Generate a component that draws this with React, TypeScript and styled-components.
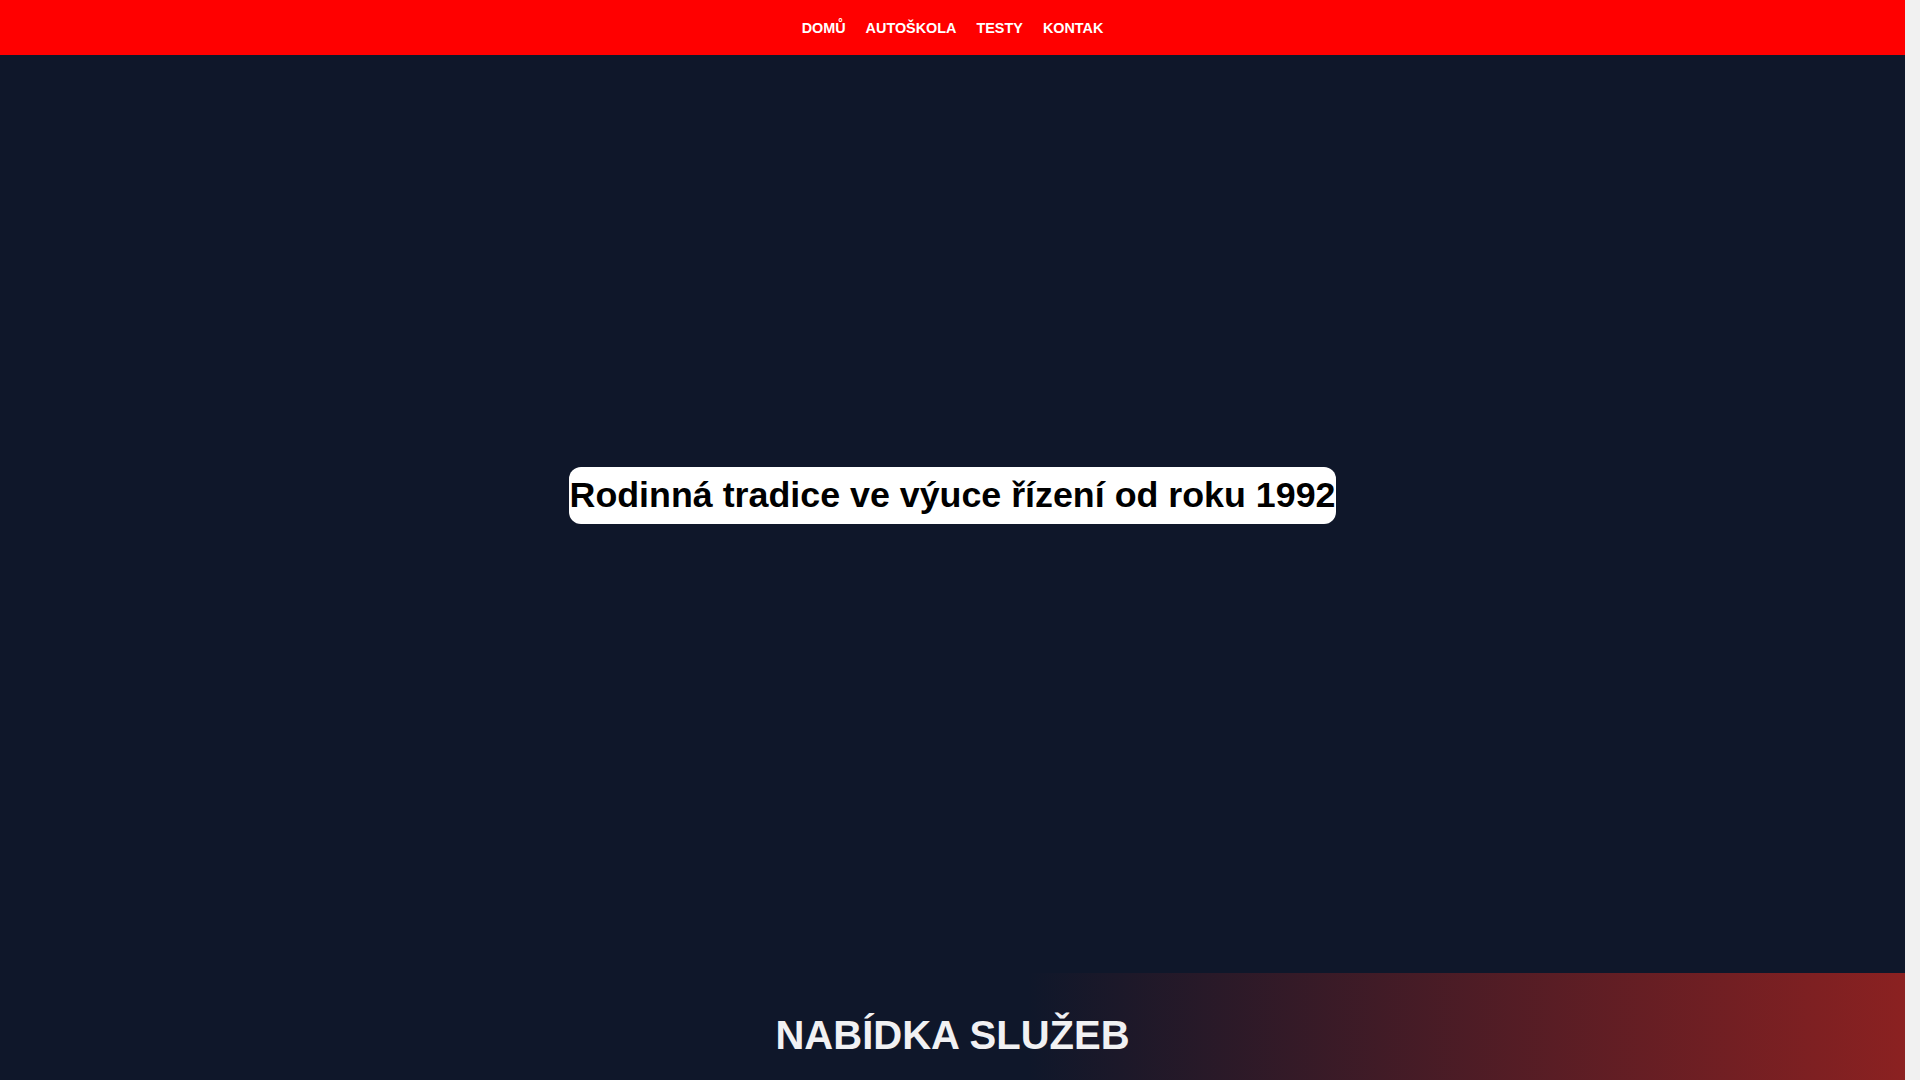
import styled, { createGlobalStyle } from 'styled-components'

/*---> Global <---*/
const GlobalStyle = createGlobalStyle`
  * {
    box-sizing: border-box;
  }

  html {
    background: #f1f1f1;
  }

  body {
    margin: 0 15px 0 0;
    background: #0f172a;
    font-family: 'Liberation Sans', Arial, sans-serif;
  }
`

const navItems = ['DOMŮ', 'AUTOŠKOLA', 'TESTY', 'KONTAK']

/*---> Components <---*/
const App = () => {
  return (
    <>
      <GlobalStyle />
      <NavBar>
        <NavList>
          {navItems.map((item) => (
            <NavItem key={item}>
              <NavLink href='#'>{item}</NavLink>
            </NavItem>
          ))}
        </NavList>
      </NavBar>
      <Hero>
        <HeroTitle>Rodinná tradice ve výuce řízení od roku 1992</HeroTitle>
      </Hero>
      <Services>
        <SectionTitle>NABÍDKA SLUŽEB</SectionTitle>
      </Services>
    </>
  )
}

/*---> Styles <---*/
const NavBar = styled.nav`
  height: 55px;
  background: #ff0000;
  display: flex;
  justify-content: center;
  align-items: center;
`

const NavList = styled.ul`
  display: flex;
  gap: 20px;
  margin: 0;
  padding: 0;
  list-style: none;
`

const NavItem = styled.li`
  display: block;
`

const NavLink = styled.a`
  color: #ffffff;
  font-size: 14.4px;
  font-weight: 700;
  text-decoration: none;
`

const Hero = styled.section`
  height: 85vh;
  background: #0f172a;
  display: flex;
  justify-content: center;
  align-items: center;
  padding-bottom: 37px;
`

const HeroTitle = styled.h1`
  margin: 0;
  padding: 8px 1px;
  background: #ffffff;
  color: #000000;
  border-radius: 12px;
  font-size: 35.8px;
  font-weight: 700;
  line-height: 41px;
`

const Services = styled.section`
  min-height: 500px;
  padding-top: 40px;
  background: linear-gradient(to right, #0f172a 54%, #8b2121 100%);
`

const SectionTitle = styled.h2`
  margin: 0;
  text-align: center;
  color: #f1f1f3;
  font-size: 40px;
  font-weight: 700;
`

export default App
